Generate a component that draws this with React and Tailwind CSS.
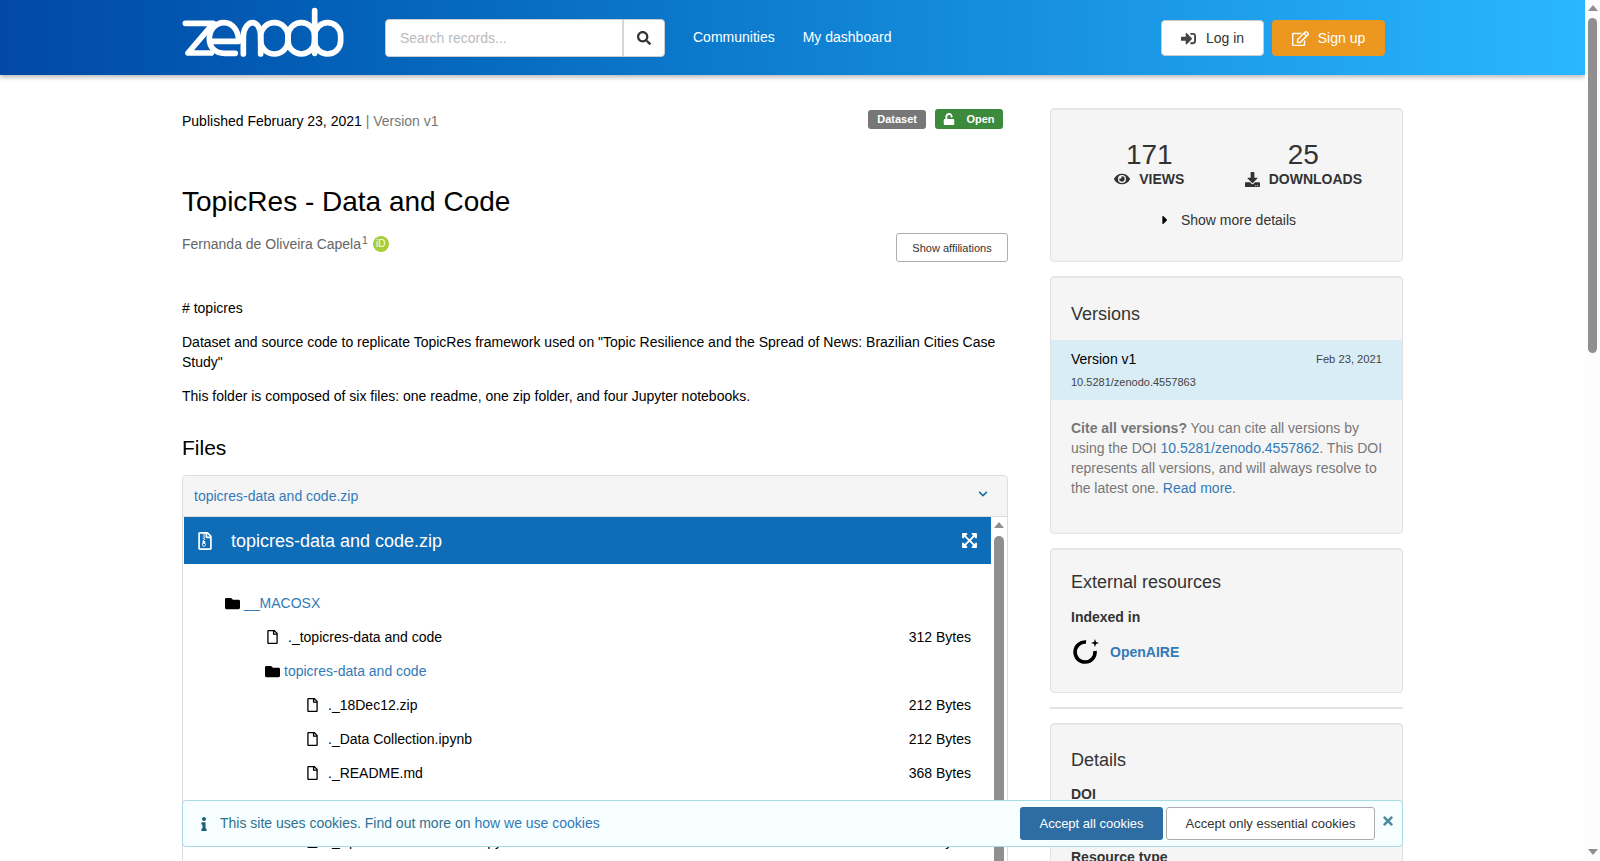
import {
  FaSearch,
  FaSignInAlt,
  FaRegEdit,
  FaUnlock,
  FaEye,
  FaDownload,
  FaCaretRight,
  FaFolder,
  FaRegFile,
  FaRegFileArchive,
  FaChevronDown,
  FaExpandArrowsAlt,
  FaInfo,
  FaTimes,
} from 'react-icons/fa';

const tree = [
  { type: 'folder', name: '__MACOSX', depth: 0 },
  { type: 'file', name: '._topicres-data and code', size: '312 Bytes', depth: 1 },
  { type: 'folder', name: 'topicres-data and code', depth: 1 },
  { type: 'file', name: '._18Dec12.zip', size: '212 Bytes', depth: 2 },
  { type: 'file', name: '._Data Collection.ipynb', size: '212 Bytes', depth: 2 },
  { type: 'file', name: '._README.md', size: '368 Bytes', depth: 2 },
  { type: 'file', name: '._Topic Resilience.ipynb', size: '212 Bytes', depth: 2 },
  { type: 'file', name: '._Spatial Resilience Test.ipynb', size: '212 Bytes', depth: 2 },
];

const indents = ['pl-[41px]', 'pl-[81px]', 'pl-[121px]'];

function Logo() {
  return (
    <svg viewBox="0 0 510 180" className="w-[170px] h-[60px] -ml-[4px]" fill="none" stroke="#fff" strokeWidth="17" strokeLinecap="round" strokeLinejoin="round">
      <path d="M22 58H106L30 147H100" />
      <path d="M96 112H182C182 78 162 56 138 56C112 56 94 78 94 104C94 130 112 148 140 148H172" />
      <path d="M196 150V98C196 74 210 56 224 56C238 56 248 74 248 98V150" />
      <rect x="248" y="56" width="82" height="94" rx="41" />
      <rect x="330" y="56" width="80" height="94" rx="40" />
      <path d="M410 20V148" />
      <rect x="410" y="56" width="78" height="94" rx="39" />
    </svg>
  );
}

function OpenAireLogo() {
  return (
    <svg viewBox="0 0 30 30" className="w-[30px] h-[30px]" fill="none">
      <path d="M15 5.1A10 10 0 1 0 24 14" stroke="#000" strokeWidth="3.6" />
      <path d="M24 2L25 5L28 6L25 7L24 10L23 7L20 6L23 5Z" fill="#000" />
    </svg>
  );
}

function Card({ className, children }) {
  return (
    <div className={`bg-[#f5f5f5] border border-[#e3e3e3] rounded-[4px] shadow-[inset_0_1px_1px_rgba(0,0,0,0.05)] ${className}`}>
      {children}
    </div>
  );
}

function Triangle({ down, className }) {
  return (
    <svg viewBox="0 0 10 6" className={`w-[10px] h-[6px] ${className}`} fill="#8f8f8f">
      <path d={down ? 'M0 0H10L5 6Z' : 'M0 6H10L5 0Z'} />
    </svg>
  );
}

export default function App() {
  return (
    <div className="h-screen w-full flex overflow-hidden bg-white text-black text-[14px] leading-[20px] font-['Liberation_Sans',Arial,sans-serif]">
      <div className="relative flex-1 min-w-0 overflow-hidden">
        <header className="relative z-10 h-[75px] flex items-start pl-[182px] bg-gradient-to-r from-[#0249a5] to-[#2ab7ff] shadow-[0_2px_5px_rgba(0,0,0,0.3)]">
          <div className="mt-[4px]"><Logo /></div>
          <div className="mt-[19px] ml-[37px] w-[280px] h-[38px] flex bg-white rounded-[4px] border border-[#ccc] overflow-hidden">
            <div className="w-[238px] px-[14px] flex items-center text-[#bbb] border-r-2 border-[#d5d5d5]">Search records...</div>
            <div className="flex-1 flex items-center justify-center text-[#333]"><FaSearch className="w-[14px] h-[14px]" /></div>
          </div>
          <nav className="mt-[27px] ml-[28px] flex gap-[28px] text-white">
            <span>Communities</span>
            <span>My dashboard</span>
          </nav>
          <div className="mt-[20px] ml-auto mr-[200px] flex gap-[8px]">
            <div className="w-[103px] h-[36px] flex items-center justify-center gap-[10px] bg-white border border-[#ccc] rounded-[4px] text-[#333]">
              <FaSignInAlt className="w-[15px] h-[15px] text-[#444]" />
              <span>Log in</span>
            </div>
            <div className="w-[113px] h-[36px] flex items-center justify-center gap-[9px] bg-[#ec971f] rounded-[4px] text-white">
              <FaRegEdit className="w-[17px] h-[17px]" />
              <span>Sign up</span>
            </div>
          </div>
        </header>

        <main className="flex pl-[182px] pt-[33px]">
          <div className="w-[826px] shrink-0">
            <div className="flex justify-between items-start h-[24px]">
              <p className="mt-[3px]">Published February 23, 2021 <span className="text-[#777]">| Version v1</span></p>
              <div className="flex gap-[9px] mr-[5px] mt-[1px] text-[11px] font-bold text-white leading-[19px]">
                <span className="h-[19px] mt-[1px] px-[9px] bg-[#777] rounded-[3px]">Dataset</span>
                <span className="h-[20px] w-[68px] flex items-center justify-center gap-[11px] bg-[#3c8b3c] rounded-[3px]">
                  <FaUnlock className="w-[12px] h-[12px]" />
                  Open
                </span>
              </div>
            </div>
            <h1 className="mt-[52px] text-[28px] leading-[36px] font-normal">TopicRes - Data and Code</h1>
            <div className="flex justify-between items-start mt-[14px]">
              <div className="flex items-center text-[#666]">
                <span>Fernanda de Oliveira Capela<sup className="text-[10.5px] ml-[1px]">1</sup></span>
                <span className="ml-[5px] w-[16px] h-[16px] rounded-full bg-[#a6ce39] text-white text-[10px] leading-[16px] text-center">iD</span>
              </div>
              <div className="w-[112px] h-[29px] -mt-[1px] flex items-center justify-center bg-white border border-[#adadad] rounded-[3px] text-[11px] text-[#333]">Show affiliations</div>
            </div>
            <p className="mt-[36px]"># topicres</p>
            <p className="mt-[14px]">Dataset and source code to replicate TopicRes framework used on "Topic Resilience and the Spread of News: Brazilian Cities Case Study"</p>
            <p className="mt-[14px]">This folder is composed of six files: one readme, one zip folder, and four Jupyter notebooks.</p>
            <h2 className="mt-[30px] text-[21px] leading-[24px] font-normal">Files</h2>

            <div className="mt-[15px] border border-[#ddd] rounded-[4px] overflow-hidden">
              <div className="h-[41px] flex items-center justify-between pl-[11px] pr-[19px] bg-[#f5f5f5] border-b border-[#ddd] text-[#337ab7]">
                <span>topicres-data and code.zip</span>
                <FaChevronDown className="w-[10px] h-[10px] text-[#1c6ea4] -mt-[4px] -ml-[1px]" />
              </div>
              <div className="flex pl-[1px]">
                <div className="w-[807px] shrink-0">
                  <div className="h-[47px] flex items-center justify-between pl-[14px] pr-[13px] bg-[#0f6cb6] text-white text-[18px]">
                    <span className="flex items-center gap-[19px]">
                      <FaRegFileArchive className="w-[14px] h-[18px]" />
                      topicres-data and code.zip
                    </span>
                    <FaExpandArrowsAlt className="w-[17px] h-[17px]" />
                  </div>
                  <div className="pt-[22px]">
                    {tree.map((row) => (
                      <div key={row.name} className={`h-[34px] flex items-center justify-between pr-[20px] ${indents[row.depth]}`}>
                        {row.type === 'folder' ? (
                          <span className="flex items-center gap-[4px] text-[#337ab7]">
                            <FaFolder className="w-[15px] h-[15px] text-black" />
                            <span>{row.name}</span>
                          </span>
                        ) : (
                          <span className="flex items-center gap-[10px] pl-[2px]">
                            <FaRegFile className="w-[11px] h-[14px]" />
                            <span>{row.name}</span>
                          </span>
                        )}
                        {row.size && <span>{row.size}</span>}
                      </div>
                    ))}
                  </div>
                </div>
                <div className="flex-1 flex flex-col items-center pt-[5px]">
                  <Triangle />
                  <div className="w-[10px] h-[500px] mt-[8px] bg-[#8f8f8f] rounded-t-[5px]" />
                </div>
              </div>
            </div>
          </div>

          <aside className="w-[353px] ml-[42px] shrink-0 text-[#333]">
            <Card className="h-[154px] pt-[31px]">
              <div className="flex">
                <div className="w-[185px] pl-[15px] flex flex-col items-center">
                  <span className="text-[28px] leading-[30px]">171</span>
                  <span className="flex items-center gap-[9px] font-bold -mt-[1px]"><FaEye className="w-[16px] h-[16px]" />VIEWS</span>
                </div>
                <div className="flex-1 flex flex-col items-center pl-[12px] pr-[40px]">
                  <span className="text-[28px] leading-[30px]">25</span>
                  <span className="flex items-center gap-[9px] font-bold -mt-[1px]"><FaDownload className="w-[15px] h-[15px]" />DOWNLOADS</span>
                </div>
              </div>
              <div className="flex items-center justify-center gap-[10px] mt-[21px] pl-[2px]">
                <FaCaretRight className="w-[12px] h-[14px] text-black" />
                Show more details
              </div>
            </Card>

            <Card className="mt-[14px] h-[258px] pt-[27px]">
              <h3 className="px-[20px] text-[18px] leading-[20px] font-normal">Versions</h3>
              <div className="mt-[16px] h-[60px] px-[20px] pt-[9px] bg-[#d9edf7]">
                <div className="flex justify-between items-center text-black">
                  <span>Version v1</span>
                  <span className="text-[11.2px] text-[#444]">Feb 23, 2021</span>
                </div>
                <div className="mt-[3px] text-[11px] text-[#444]">10.5281/zenodo.4557863</div>
              </div>
              <p className="pl-[20px] pr-[18px] mt-[18px] text-[#777]">
                <b>Cite all versions?</b> You can cite all versions by using the DOI <span className="text-[#337ab7]">10.5281/zenodo.4557862</span>. This DOI represents all versions, and will always resolve to the latest one. <span className="text-[#337ab7]">Read more</span>.
              </p>
            </Card>

            <Card className="mt-[14px] h-[145px] pt-[23px] px-[20px]">
              <h3 className="text-[18px] leading-[20px] font-normal">External resources</h3>
              <div className="mt-[15px] font-bold">Indexed in</div>
              <div className="mt-[10px] flex items-center gap-[9px] font-bold text-[#337ab7]">
                <OpenAireLogo />
                OpenAIRE
              </div>
            </Card>

            <div className="mt-[14px] h-[2px] bg-[#e3e3e3]" />

            <Card className="mt-[14px] h-[300px] pt-[26px] px-[20px]">
              <h3 className="text-[18px] leading-[20px] font-normal">Details</h3>
              <div className="mt-[14px] font-bold">DOI</div>
              <div className="mt-[43px] font-bold">Resource type</div>
            </Card>
          </aside>
        </main>

        <div className="absolute z-20 left-[182px] top-[800px] w-[1221px] h-[47px] flex items-center pl-[17px] pr-[8px] bg-[#f6feff] border border-[#a9dbe5] rounded-[4px] text-[#31708f]">
          <FaInfo className="w-[8px] h-[14px] text-[#1c5f75]" />
          <span className="ml-[12px] -mt-[2px]">This site uses cookies. Find out more on <span className="text-[#337ab7]">how we use cookies</span></span>
          <div className="ml-auto h-[33px] w-[143px] flex items-center justify-center bg-[#2e6da4] text-white text-[13px] rounded-[3px]">Accept all cookies</div>
          <div className="ml-[3px] h-[33px] w-[209px] flex items-center justify-center bg-white border border-[#adadad] text-[#333] text-[13px] rounded-[3px]">Accept only essential cookies</div>
          <FaTimes className="ml-[7px] mb-[6px] w-[12px] h-[14px] text-[#4f8a9c]" />
        </div>
      </div>

      <div className="w-[15px] shrink-0 flex flex-col items-center bg-[#fdfdfd]">
        <Triangle className="mt-[5px]" />
        <div className="w-[9px] h-[335px] mt-[7px] bg-[#8f8f8f] rounded-[5px]" />
        <Triangle down className="mt-auto mb-[6px]" />
      </div>
    </div>
  );
}
